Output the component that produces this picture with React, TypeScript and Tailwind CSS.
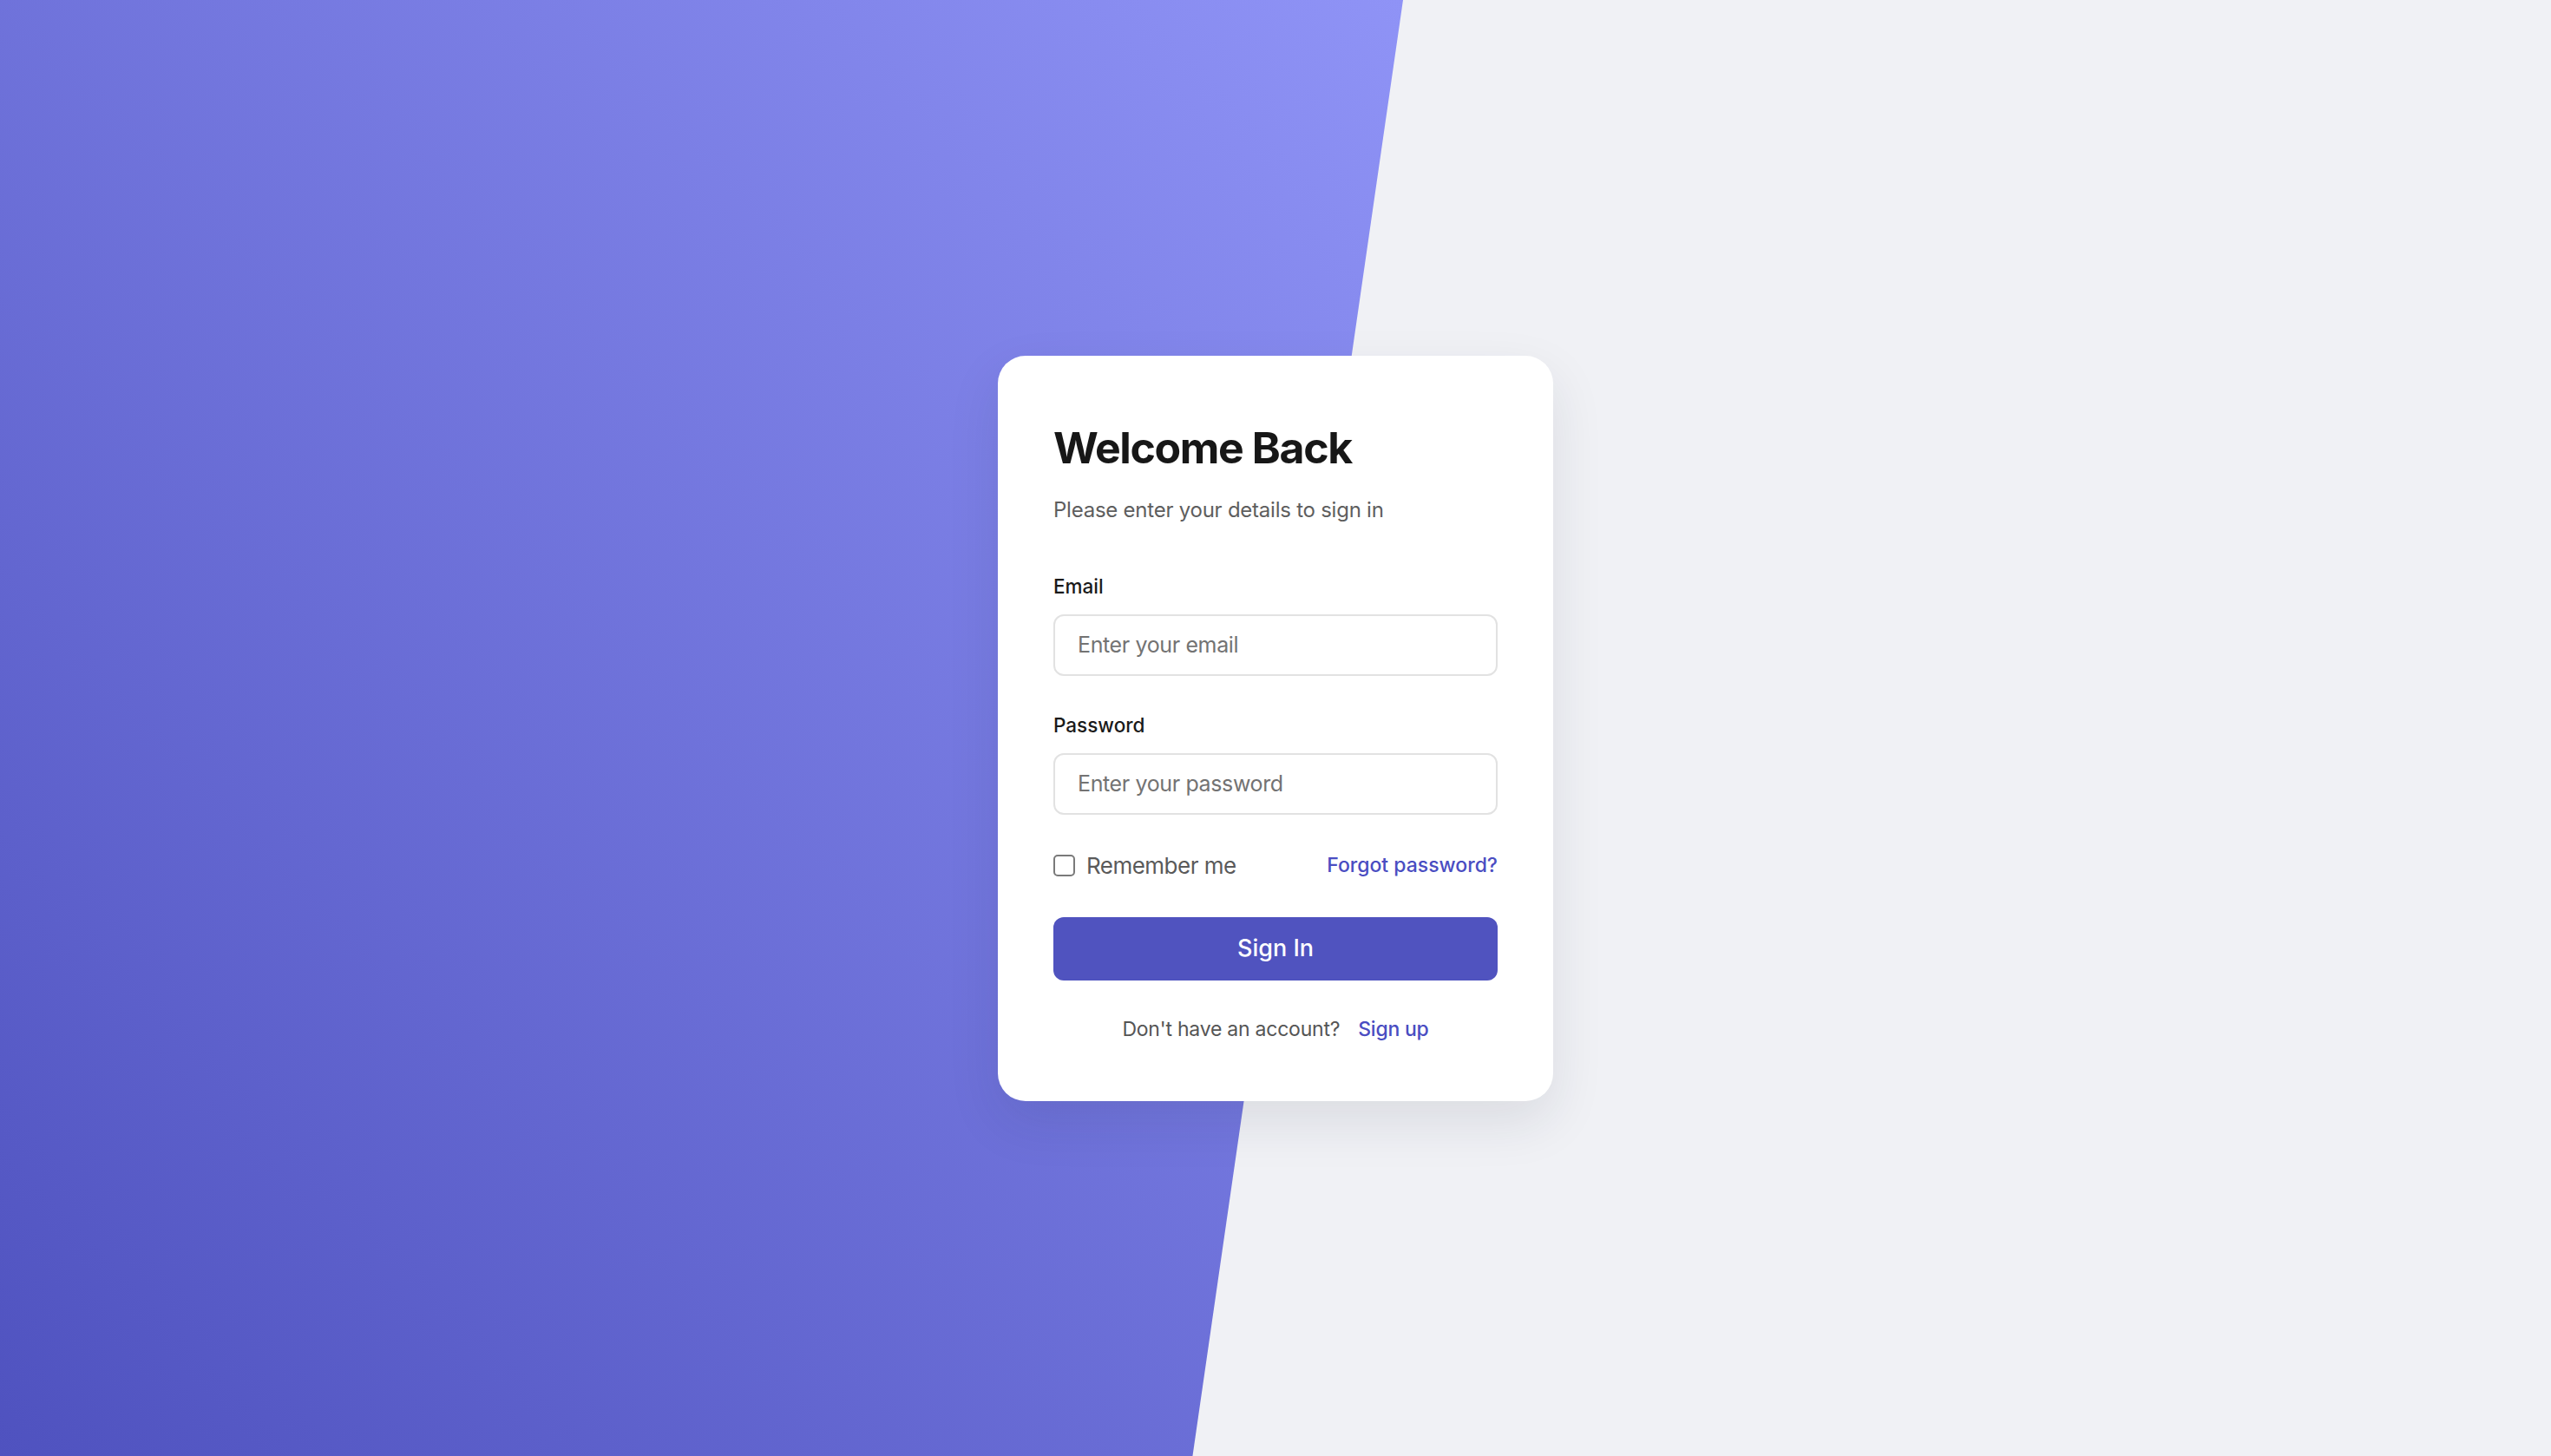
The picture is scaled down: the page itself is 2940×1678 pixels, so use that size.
import { useState } from "react";

export default function App() {
  const [remember, setRemember] = useState(false);

  return (
    <div className="relative flex min-h-screen w-full items-center justify-center overflow-hidden bg-[#f0f1f5] font-['Inter',sans-serif]">
      {/* slanted gradient backdrop */}
      <div className="absolute inset-y-0 left-0 w-[55%] bg-[linear-gradient(to_top_right,#4f52bf,#8f93f6)] [clip-path:polygon(0_0,100%_0,85%_100%,0_100%)]" />

      <div className="relative w-[640px] rounded-[32px] bg-white px-[64px] pt-[76px] pb-[67px] shadow-[0_24px_60px_rgba(30,35,60,0.10)]">
        <h1 className="text-[50px] leading-[60px] font-bold tracking-[-0.028em] text-[#171717]">
          Welcome Back
        </h1>
        <p className="mt-[26px] text-[24px] leading-[32px] tracking-[-0.01em] text-[#5e5e5e]">
          Please enter your details to sign in
        </p>

        <form className="mt-[57px] flex flex-col" onSubmit={(e) => e.preventDefault()}>
          <label className="text-[22.5px] leading-[30px] font-medium text-[#1a1a1a]" htmlFor="email">
            Email
          </label>
          <input
            id="email"
            type="email"
            placeholder="Enter your email"
            className="mt-[17px] h-[71px] w-full rounded-[12px] border-2 border-[#e2e2e2] px-[26px] text-[25px] tracking-[-0.015em] text-[#1a1a1a] outline-none placeholder:text-[#737373]"
          />

          <label className="mt-[42px] text-[22.5px] leading-[30px] font-medium text-[#1a1a1a]" htmlFor="password">
            Password
          </label>
          <input
            id="password"
            type="password"
            placeholder="Enter your password"
            className="mt-[17px] h-[71px] w-full rounded-[12px] border-2 border-[#e2e2e2] px-[26px] text-[25px] tracking-[-0.015em] text-[#1a1a1a] outline-none placeholder:text-[#737373]"
          />

          <div className="mt-[41px] flex h-[36px] items-center justify-between">
            <label className="flex items-center gap-[13px] text-[26px] tracking-[-0.02em] text-[#5a5a5a]">
              <input
                type="checkbox"
                checked={remember}
                onChange={(e) => setRemember(e.target.checked)}
                className="h-[25px] w-[25px] appearance-none rounded-[5px] border-2 border-[#7a7a7a] bg-white checked:bg-[#5053bf]"
              />
              Remember me
            </label>
            <a href="#" className="text-[23px] font-medium text-[#4a4dc2]">
              Forgot password?
            </a>
          </div>

          <button
            type="submit"
            className="mt-[41px] h-[73px] w-full rounded-[12px] bg-[#5053bf] text-[27px] font-medium text-white"
          >
            Sign In
          </button>
        </form>

        <p className="mt-[40px] flex items-center justify-center gap-[21px] text-[23px] leading-[32px] tracking-[-0.01em] text-[#555555]">
          <span>Don't have an account?</span>
          <a href="#" className="font-medium text-[#4a4dc2]">
            Sign up
          </a>
        </p>
      </div>
    </div>
  );
}
